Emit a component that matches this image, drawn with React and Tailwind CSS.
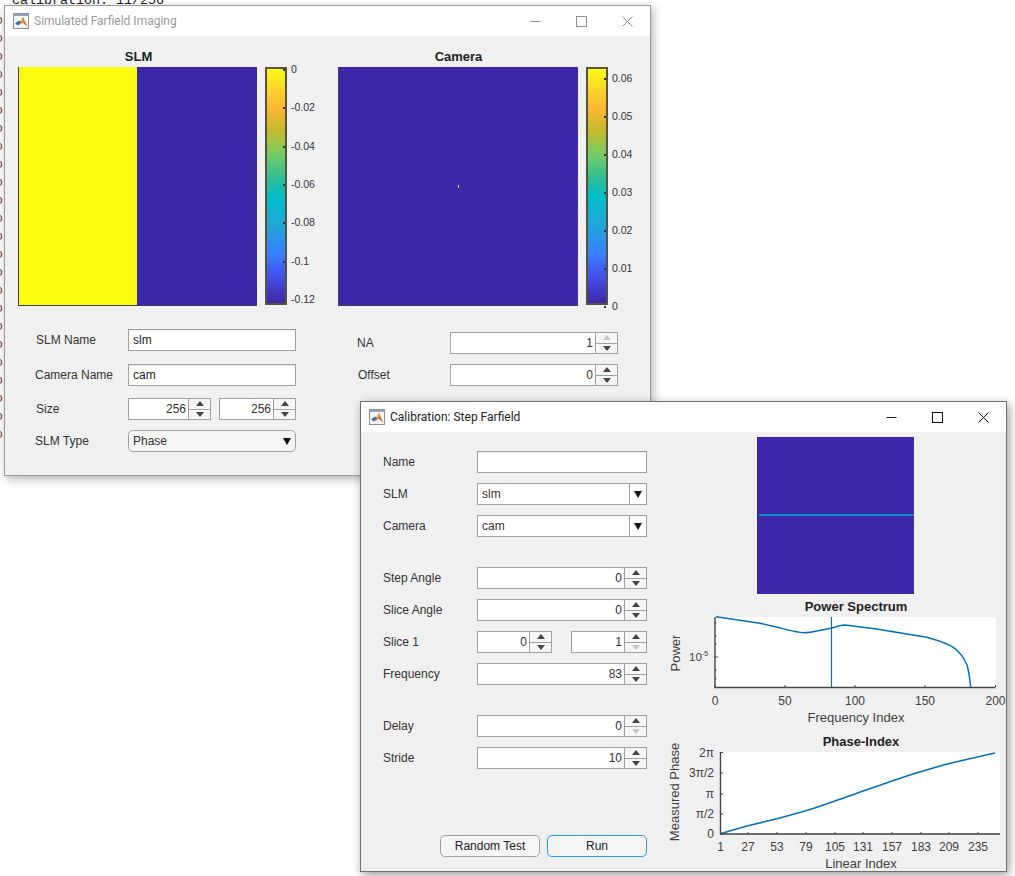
import React from 'react';

const PARULA = 'bg-[linear-gradient(to_bottom,#f9fb15_0%,#fdd72c_8%,#ffb833_16%,#c8b92a_26%,#72cc68_37%,#25bd9c_48%,#00bcc8_55%,#20a8d8_66%,#3a7cff_80%,#4352ee_88%,#3e26a8_100%)]';

function MatlabIcon() {
    return (
        <svg width="16" height="16" viewBox="0 0 16 16" className="shrink-0">
            <rect x="0.5" y="0.5" width="15" height="15" fill="#f1f3f5" stroke="#8c8f94" />
            <rect x="1" y="1" width="14" height="2" fill="#8ea6c4" />
            <polygon points="2,10.5 6,7.5 8,9 5,12.5" fill="#2a6fbe" />
            <polygon points="5,12.5 8,8 10,4 12,9 14.5,13.5 11.5,11 9.5,9.5" fill="#e0561a" />
            <polygon points="8,8 10,4 10.5,9 9,10" fill="#f7a62a" />
        </svg>
    );
}

function TitleBar({ title, active }) {
    const stroke = active ? '#111111' : '#8f8f8f';
    return (
        <div className="h-[30px] bg-white flex items-center pl-[8px] shrink-0">
            <MatlabIcon />
            <span className={`ml-[5px] flex-1 text-[12px] font-['Roboto',sans-serif] whitespace-nowrap ${active ? 'text-[#222222]' : 'text-[#999999]'}`}>
                {title}
            </span>
            <div className="w-[46px] h-[30px] flex items-center justify-center">
                <svg width="11" height="11" viewBox="0 0 11 11"><path d="M0.5 5.5h10" stroke={stroke} fill="none" /></svg>
            </div>
            <div className="w-[46px] h-[30px] flex items-center justify-center">
                <svg width="11" height="11" viewBox="0 0 11 11"><rect x="0.5" y="0.5" width="10" height="10" stroke={stroke} fill="none" /></svg>
            </div>
            <div className="w-[46px] h-[30px] flex items-center justify-center">
                <svg width="11" height="11" viewBox="0 0 11 11"><path d="M0.5 0.5l10 10M10.5 0.5l-10 10" stroke={stroke} fill="none" /></svg>
            </div>
        </div>
    );
}

function TextField({ value, className = 'w-[168px]' }) {
    return (
        <div className={`h-[22px] bg-white border border-[#a0a0a0] shadow-[inset_0_1px_0_#ececec] px-[4px] flex items-center text-[12px] text-[#222222] ${className}`}>
            {value}
        </div>
    );
}

function Arrow({ up, disabled }) {
    return (
        <svg width="8" height="5" viewBox="0 0 8 5">
            <polygon points={up ? '4,0 8,5 0,5' : '0,0 8,0 4,5'} fill={disabled ? '#c4c4c4' : '#444444'} />
        </svg>
    );
}

function Spinner({ value, className = 'w-[168px]', upDisabled, downDisabled }) {
    return (
        <div className={`h-[22px] bg-white border border-[#a0a0a0] flex text-[12px] text-[#333333] ${className}`}>
            <div className="flex-1 flex items-center justify-end pr-[2px]">{value}</div>
            <div className="w-[22px] flex flex-col bg-[#f6f6f6] border-l border-[#a0a0a0]">
                <div className="flex-1 flex items-center justify-center border-b border-[#a0a0a0]">
                    <Arrow up disabled={upDisabled} />
                </div>
                <div className="flex-1 flex items-center justify-center">
                    <Arrow disabled={downDisabled} />
                </div>
            </div>
        </div>
    );
}

function Row({ label, labelWidth, labelClass = '', className = '', children }) {
    return (
        <div className={`flex items-center ${className}`}>
            <div className={`shrink-0 text-[12px] text-[#333333] whitespace-nowrap ${labelWidth} ${labelClass}`}>{label}</div>
            {children}
        </div>
    );
}

function Colorbar({ ticks, labelsClass }) {
    return (
        <div className="flex ml-[8px]">
            <div className={`w-[22px] h-[238px] border-2 border-[#55553f] ${PARULA}`} />
            <div className={`-ml-[4px] flex flex-col justify-between ${labelsClass}`}>
                {ticks.map(t => (
                    <div key={t} className="h-[12px] flex items-center">
                        <div className="w-[2px] h-[2px] bg-[#333333]" />
                        <div className="ml-[6px] text-[10.5px] text-[#333333] whitespace-nowrap">{t}</div>
                    </div>
                ))}
            </div>
        </div>
    );
}

function PlotTitle({ children, className }) {
    return <div className={`h-[18px] pb-[2px] flex items-center justify-center text-[13px] font-bold text-[#222222] ${className}`}>{children}</div>;
}

function SimulatedWindow() {
    return (
        <div className="absolute left-[4px] top-[5px] w-[647px] h-[471px] bg-[#f0f0f0] border border-[#9a9a9a] shadow-[2px_3px_9px_rgba(0,0,0,0.3)] flex flex-col">
            <TitleBar title="Simulated Farfield Imaging" />
            <div className="pl-[13px] pt-[13px] flex">
                <div className="w-[320px] shrink-0">
                    <PlotTitle className="w-[241px]">SLM</PlotTitle>
                    <div className="flex">
                        <div className="w-[239px] h-[239px] flex border-l border-b border-[#444444] bg-[#3e26a8]">
                            <div className="w-[118px] bg-[#fafc0f]" />
                        </div>
                        <Colorbar
                            ticks={['0', '-0.02', '-0.04', '-0.06', '-0.08', '-0.1', '-0.12']}
                            labelsClass="-mt-[3px]"
                        />
                    </div>
                </div>
                <div className="w-[300px] shrink-0">
                    <PlotTitle className="w-[241px]">Camera</PlotTitle>
                    <div className="flex">
                        <div className="w-[240px] h-[239px] flex items-center justify-center border-l border-b border-[#444444] bg-[#3e26a8]">
                            <div className="w-px h-[3px] bg-[#e8e040]" />
                        </div>
                        <Colorbar
                            ticks={['0.06', '0.05', '0.04', '0.03', '0.02', '0.01', '0']}
                            labelsClass="mt-[6px] -mb-[7px]"
                        />
                    </div>
                </div>
            </div>
            <div className="flex pl-[31px]">
                <div className="w-[321px] pt-[23px]">
                    <Row label="SLM Name" labelWidth="w-[92px]"><TextField value="slm" /></Row>
                    <Row label="Camera Name" labelWidth="w-[92px]" labelClass="-ml-px" className="mt-[13px]">
                        <div className="ml-px"><TextField value="cam" /></div>
                    </Row>
                    <Row label="Size" labelWidth="w-[92px]" className="mt-[12px]">
                        <Spinner value="256" className="w-[83px]" />
                        <Spinner value="256" className="w-[77px] ml-[8px]" />
                    </Row>
                    <Row label="SLM Type" labelWidth="w-[92px]" labelClass="-ml-px" className="mt-[10px]">
                        <div className="ml-px w-[168px] h-[22px] rounded-[5px] border border-[#a0a0a0] bg-[#f5f5f5] flex items-center justify-between pl-[4px] pr-[4px] text-[12px] text-[#333333]">
                            Phase
                            <svg width="8" height="7" viewBox="0 0 8 7"><polygon points="0,0 8,0 4,7" fill="#111111" /></svg>
                        </div>
                    </Row>
                </div>
                <div className="pt-[26px]">
                    <Row label="NA" labelWidth="w-[93px]"><Spinner value="1" upDisabled /></Row>
                    <Row label="Offset" labelWidth="w-[93px]" labelClass="pl-px" className="mt-[10px]"><Spinner value="0" /></Row>
                </div>
            </div>
        </div>
    );
}

function ComboBox({ value }) {
    return (
        <div className="w-[170px] h-[22px] bg-white border border-[#a0a0a0] flex text-[12px] text-[#333333]">
            <div className="flex-1 flex items-center px-[4px]">{value}</div>
            <div className="w-[17px] border-l border-[#a0a0a0] flex items-center justify-center">
                <svg width="8" height="7" viewBox="0 0 8 7"><polygon points="0,0 8,0 4,7" fill="#111111" /></svg>
            </div>
        </div>
    );
}

function PowerChart() {
    const xTicks = [[715, '0'], [785, '50'], [855, '100'], [925, '150'], [995.5, '200']];
    return (
        <svg width="341" height="134" viewBox="665 596 341 134" className="block font-['Liberation_Sans',sans-serif]">
            <text x="856" y="611" textAnchor="middle" fontSize="13" fontWeight="700" fill="#222222">Power Spectrum</text>
            <rect x="715" y="617" width="281" height="70" fill="#ffffff" />
            <path d="M716 616.7L760 623.3C780 627 795 632.7 803.3 632.7C812 632.7 820 630 831.7 628C838 626 842 625 845 625L876.7 629L926.7 637.3C940 641 948 644 953.3 647.3C960 652 965 660 967 665C969 672 970 680 970.7 687.3" stroke="#0072bd" strokeWidth="1.5" fill="none" />
            <path d="M831.5 617V687" stroke="#0072bd" strokeWidth="1.2" fill="none" />
            <path d="M715 617V687.5H995.5" stroke="#444444" strokeWidth="1.4" fill="none" />
            {xTicks.map(([x]) => <path key={x} d={`M${x} 687V685`} stroke="#444444" />)}
            <path d="M715 657H718M715 623H716.5M715 636H716.5M715 644H716.5M715 670H716.5M715 679H716.5" stroke="#444444" fill="none" />
            {xTicks.map(([x, t]) => <text key={t} x={x} y="705" textAnchor="middle" fontSize="12" fill="#404040">{t}</text>)}
            <text x="689" y="661" fontSize="11.5" fill="#404040">10</text>
            <text x="701.5" y="656" fill="#404040" fontSize="7.5">-5</text>
            <text x="856" y="722" textAnchor="middle" fontSize="13" fill="#404040">Frequency Index</text>
            <text transform="translate(680 653) rotate(-90)" textAnchor="middle" fontSize="13" fill="#404040">Power</text>
        </svg>
    );
}

function PhaseChart() {
    const xTicks = [[720.5, '1'], [748, '27'], [777, '53'], [806, '79'], [835, '105'], [863, '131'], [892, '157'], [921, '183'], [949, '209'], [978, '235']];
    const yTicks = [[752.5, '2π'], [773, '3π/2'], [794, 'π'], [814, 'π/2'], [834, '0']];
    return (
        <svg width="341" height="141" viewBox="665 730 341 141" className="block font-['Liberation_Sans',sans-serif]">
            <text x="861" y="746" textAnchor="middle" fontSize="13" fontWeight="700" fill="#222222">Phase-Index</text>
            <rect x="720" y="752" width="280" height="82" fill="#ffffff" />
            <path d="M721 833.5L747 826L777 818.7L805 811C815 808 825 804.5 833 801.7C845 797.5 855 794 863 791L890 781.7C900 778 910 775 917 772.7L947 764L973 758L995 753" stroke="#0072bd" strokeWidth="1.5" fill="none" />
            <path d="M720.5 752V834H1000" stroke="#444444" strokeWidth="1.4" fill="none" />
            {xTicks.map(([x]) => <path key={x} d={`M${x} 834V832`} stroke="#444444" />)}
            {yTicks.map(([y]) => <path key={y} d={`M720.5 ${y}H723`} stroke="#444444" />)}
            {xTicks.map(([x, t]) => <text key={t} x={x} y="851" textAnchor="middle" fontSize="12" fill="#404040">{t}</text>)}
            {yTicks.map(([y, t]) => <text key={t} x="714" y={y + 4} textAnchor="end" fontSize="12" fill="#404040">{t}</text>)}
            <text x="861" y="868" textAnchor="middle" fontSize="13" fill="#404040">Linear Index</text>
            <text transform="translate(679 792) rotate(-90)" textAnchor="middle" fontSize="13" fill="#404040">Measured Phase</text>
        </svg>
    );
}

function CalibrationWindow() {
    const lw = 'w-[94px]';
    return (
        <div className="absolute left-[360px] top-[401px] w-[647px] h-[471px] bg-[#f0f0f0] border border-[#6e6e6e] shadow-[2px_3px_9px_rgba(0,0,0,0.4)] flex flex-col">
            <TitleBar title="Calibration: Step Farfield" active />
            <div className="flex flex-1">
                <div className="w-[304px] pl-[22px] pt-[19px]">
                    <Row label="Name" labelWidth={lw}><TextField value="" className="w-[170px]" /></Row>
                    <Row label="SLM" labelWidth={lw} className="mt-[10px]"><ComboBox value="slm" /></Row>
                    <Row label="Camera" labelWidth={lw} className="mt-[10px]"><ComboBox value="cam" /></Row>
                    <Row label="Step Angle" labelWidth={lw} className="mt-[30px]"><Spinner value="0" className="w-[170px]" /></Row>
                    <Row label="Slice Angle" labelWidth={lw} className="mt-[10px]"><Spinner value="0" className="w-[170px]" /></Row>
                    <Row label="Slice 1" labelWidth={lw} className="mt-[10px]">
                        <Spinner value="0" className="w-[75px]" />
                        <Spinner value="1" className="w-[76px] ml-[19px]" downDisabled />
                    </Row>
                    <Row label="Frequency" labelWidth={lw} className="mt-[10px]"><Spinner value="83" className="w-[170px]" /></Row>
                    <Row label="Delay" labelWidth={lw} className="mt-[30px]"><Spinner value="0" className="w-[170px]" downDisabled /></Row>
                    <Row label="Stride" labelWidth={lw} className="mt-[10px]"><Spinner value="10" className="w-[170px]" /></Row>
                    <div className="mt-[66px] flex justify-end gap-[7px] w-[264px] text-[12px] text-[#222222]">
                        <div className="w-[100px] h-[22px] rounded-[5px] border border-[#a0a0a0] bg-[#f5f5f5] flex items-center justify-center">Random Test</div>
                        <div className="w-[100px] h-[22px] rounded-[5px] border border-[#1e9bf0] bg-[#f5f5f5] flex items-center justify-center">Run</div>
                    </div>
                </div>
                <div className="w-[341px] pt-[5px]">
                    <div className="w-[157px] h-[157px] ml-[92px] bg-[#3e26a8] flex items-center justify-end">
                        <div className="w-[155px] h-[2px] mb-[2px] bg-[#0e8cc0]" />
                    </div>
                    <div className="mt-[2px]"><PowerChart /></div>
                    <PhaseChart />
                </div>
            </div>
        </div>
    );
}

export default function App() {
    const rows = Array.from({ length: 24 }, (_, i) => i);
    return (
        <div className="relative w-[1015px] h-[876px] overflow-hidden bg-white font-['Liberation_Sans',Arial,sans-serif]">
            <div className="absolute left-[12px] -top-[8px] font-['Liberation_Mono',monospace] text-[13.33px] leading-[18px] text-[#222222] whitespace-pre">calibration: 11/256</div>
            <div className="absolute -left-[5px] top-[12px] flex flex-col font-['Liberation_Mono',monospace] text-[13.33px] leading-[18px] text-[#7a4a30]">
                {rows.map(i => <div key={i}>o</div>)}
            </div>
            <SimulatedWindow />
            <CalibrationWindow />
        </div>
    );
}
